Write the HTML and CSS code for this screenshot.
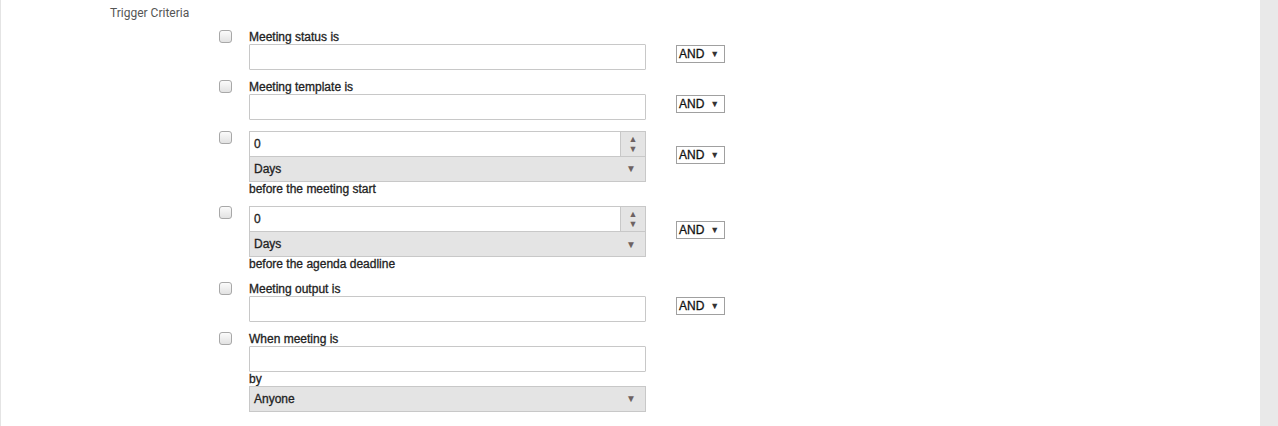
FILE: index.html
```html
<!DOCTYPE html>
<html>
<head>
<meta charset="utf-8">
<link rel="stylesheet" href="styles.css">
</head>
<body>
<div class="page">
  <div class="edge"></div>
  <div class="main">
    <div class="title">Trigger Criteria</div>
    <div class="rows">
      <div class="row">
        <span class="cb"></span>
        <div class="field">
          <div class="label">Meeting status is</div>
          <div class="input"></div>
        </div>
        <div class="and">AND <span class="tri">&#9660;</span></div>
      </div>
      <div class="row">
        <span class="cb"></span>
        <div class="field">
          <div class="label">Meeting template is</div>
          <div class="input"></div>
        </div>
        <div class="and">AND <span class="tri">&#9660;</span></div>
      </div>
      <div class="row">
        <span class="cb"></span>
        <div class="field">
          <div class="num"><span class="val">0</span><span class="spin"><span>&#9650;</span><span>&#9660;</span></span></div>
          <div class="sel"><span class="val">Days</span><span class="arr">&#9660;</span></div>
          <div class="label">before the meeting start</div>
        </div>
        <div class="and">AND <span class="tri">&#9660;</span></div>
      </div>
      <div class="row">
        <span class="cb"></span>
        <div class="field">
          <div class="num"><span class="val">0</span><span class="spin"><span>&#9650;</span><span>&#9660;</span></span></div>
          <div class="sel"><span class="val">Days</span><span class="arr">&#9660;</span></div>
          <div class="label">before the agenda deadline</div>
        </div>
        <div class="and">AND <span class="tri">&#9660;</span></div>
      </div>
      <div class="row">
        <span class="cb"></span>
        <div class="field">
          <div class="label">Meeting output is</div>
          <div class="input"></div>
        </div>
        <div class="and">AND <span class="tri">&#9660;</span></div>
      </div>
      <div class="row">
        <span class="cb"></span>
        <div class="field">
          <div class="label">When meeting is</div>
          <div class="input"></div>
          <div class="label">by</div>
          <div class="sel"><span class="val">Anyone</span><span class="arr">&#9660;</span></div>
        </div>
      </div>
    </div>
  </div>
  <div class="scroll"></div>
</div>
</body>
</html>
```
FILE: styles.css
```css
html, body { margin: 0; padding: 0; background: #fff; }
body { font-family: "Liberation Sans", Arial, sans-serif; font-size: 12px; color: #222; }
.page { display: flex; width: 1278px; height: 426px; overflow: hidden; }
.edge { width: 1px; background: #e4e4e4; flex: none; }
.main { flex: 1; padding-left: 109px; }
.scroll { width: 18px; flex: none; background: #e9e9e9; }
.title { padding-top: 6px; line-height: 14px; height: 14px; color: #555; font-size: 12px; font-family: Roboto, "Liberation Sans", sans-serif; }
.rows { margin-top: 10px; margin-left: 109px; display: flex; flex-direction: column; gap: 10.4px; }
.row { display: flex; align-items: flex-start; }
.cb {
  flex: none; width: 11px; height: 11px; border: 1px solid #a8a8a8; border-radius: 3px;
  background: linear-gradient(#fbfbfb, #e2e2e2); margin-right: 17px;
}
.field { width: 397px; display: flex; flex-direction: column; }
.label, .val, .and { -webkit-text-stroke: 0.3px currentColor; }
.label { line-height: 14px; height: 14px; color: #222; }
.input { height: 24px; border: 1px solid #c8c8c8; background: #fff; border-radius: 1px; }
.num {
  height: 24px; border: 1px solid #c8c8c8; border-bottom: none; display: flex; background: #fff;
}
.num .val { flex: 1; padding-left: 4px; line-height: 24px; }
.spin {
  width: 24px; background: #e4e4e4; border-left: 1px solid #c8c8c8; display: flex; flex-direction: column;
  align-items: center; justify-content: center; color: #6e6262; font-size: 9px; line-height: 10px;
}
.sel {
  height: 24px; border: 1px solid #c8c8c8; background: #e4e4e4; display: flex; align-items: center;
}
.sel .val { flex: 1; padding-left: 4px; color: #222; }
.sel .arr { width: 28px; text-align: center; color: #6e6262; font-size: 10px; }
.and {
  margin-left: 30px; margin-top: 15px; width: 45px; height: 16px; border: 1px solid #a0a0a0;
  padding-left: 2px; line-height: 16px; color: #111; font-size: 12px;
  display: flex; align-items: center; gap: 6px;
}
.and .tri { font-size: 9px; color: #333; -webkit-text-stroke: 0; }
```
